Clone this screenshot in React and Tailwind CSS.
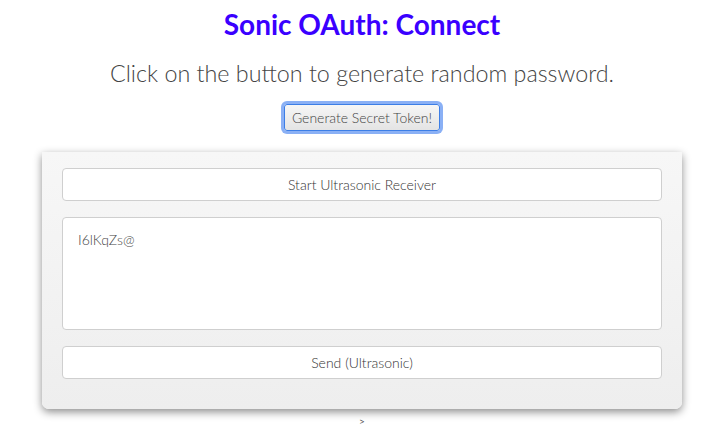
import React from 'react';

const App = () => {
  return (
    <div className="w-[724px] h-[438px] bg-white overflow-hidden" style={{ fontFamily: 'Lato, "Open Sans", sans-serif' }}>
      <h1 className="text-center text-[28px] leading-[34px] font-bold text-[#3a00ff] pt-[7px]">
        Sonic OAuth: Connect
      </h1>

      <p className="text-center text-[23.3px] leading-[28px] font-light text-[#444] mt-[18px]">
        Click on the button to generate random password.
      </p>

      <div className="flex justify-center mt-[17px]">
        <button className="h-[27px] px-[7px] text-[14px] font-light text-[#444] bg-gradient-to-b from-[#f6f6f6] to-[#e4e4e4] border border-[#3d7ee6] rounded-[3px] ring-[3px] ring-[#8ab0f5]">
          Generate Secret Token!
        </button>
      </div>

      <div className="w-[640px] mx-auto mt-[21px] px-[20px] pt-[16px] pb-[30px] bg-gradient-to-b from-[#f7f7f7] to-[#eeeeee] rounded-b-[7px] shadow-[0_3px_8px_rgba(0,0,0,0.45)] flex flex-col gap-[16px]">
        <button className="h-[33px] w-full bg-white border border-[#cfcfcf] rounded-[4px] text-[14px] font-light text-[#333]">
          Start Ultrasonic Receiver
        </button>
        <textarea
          className="h-[113px] w-full bg-white border border-[#cfcfcf] rounded-[4px] text-[14px] font-light text-[#444] px-[15px] py-[11px] resize-none outline-none"
          defaultValue="I6lKqZs@"
        />
        <button className="h-[33px] w-full bg-white border border-[#cfcfcf] rounded-[4px] text-[14px] font-light text-[#333]">
          Send (Ultrasonic)
        </button>
      </div>

      <div className="text-center text-[10px] text-[#555] mt-[5px]">&gt;</div>
    </div>
  );
};

export default App;
